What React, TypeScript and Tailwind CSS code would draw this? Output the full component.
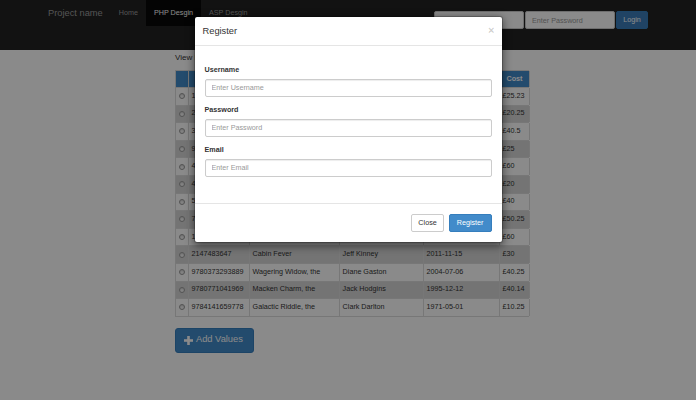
import React from "react";

const rows: string[][] = [
  ["1407109340", "Skulduggery Pleasant", "Derek Landy", "2007-04-02", "£25.23"],
  ["2070541274", "Harry Potter, the", "J. K. Rowling", "1998-10-09", "£20.25"],
  ["3442470165", "Perfume, the", "Patrick Suskind", "1985-03-12", "£40.5"],
  ["9780007117116", "Hobbit, the", "J. R. R. Tolkien", "1937-09-21", "£25"],
  ["4061859994", "Norwegian Wood", "Haruki Murakami", "1987-08-04", "£60"],
  ["4101001545", "Kokoro", "Natsume Soseki", "1914-04-20", "£20"],
  ["5170185720", "Master and Margarita", "Mikhail Bulgakov", "1967-11-01", "£40"],
  ["7020002205", "Dream of the Red", "Cao Xueqin", "1791-02-14", "£50.25"],
  ["1853260002", "Pride and Prejudice", "Jane Austen", "1813-01-28", "£60"],
  ["2147483647", "Cabin Fever", "Jeff Kinney", "2011-11-15", "£30"],
  ["9780373293889", "Wagering Widow, the", "Diane Gaston", "2004-07-06", "£40.25"],
  ["9780771041969", "Macken Charm, the", "Jack Hodgins", "1995-12-12", "£40.14"],
  ["9784141659778", "Galactic Riddle, the", "Clark Darlton", "1971-05-01", "£10.25"],
];

const headers = ["", "ISBN", "Title", "Author", "Date", "Cost"];

function Radio() {
  return (
    <div className="w-[6px] h-[6px] rounded-full border border-[#9a9a9a] bg-[#f2f2f2] shadow-[inset_0_1px_1px_rgba(0,0,0,0.15)]" />
  );
}

function PlusIcon() {
  return (
    <svg width="9" height="9" viewBox="0 0 9 9" className="shrink-0">
      <rect x="3.2" y="0" width="2.6" height="9" fill="white" />
      <rect x="0" y="3.2" width="9" height="2.6" fill="white" />
    </svg>
  );
}

export default function App() {
  return (
    <div className="relative h-[400px] w-[696px] overflow-hidden bg-white font-['Liberation_Sans',Arial,sans-serif] text-[#333]">
      {/* Navbar */}
      <nav className="h-[50px] bg-[#222] flex px-[40px]">
        <div className="px-[8px] h-[26px] leading-[26px] text-[9.3px] text-[#9d9d9d]">Project name</div>
        <ul className="flex">
          <li className="px-[8px] h-[26px] leading-[26px] text-[7.2px] text-[#9d9d9d]">Home</li>
          <li className="px-[8px] h-[26px] leading-[26px] text-[7.2px] text-white bg-[#080808]">PHP Desgin</li>
          <li className="px-[8px] h-[26px] leading-[26px] text-[7.2px] text-[#9d9d9d]">ASP Desgin</li>
        </ul>
        <div className="ml-auto mr-[8px] mt-[11px] flex gap-[1px] h-[18px]">
          <input
            placeholder="Enter Username"
            className="w-[90px] h-[18px] border border-[#ccc] rounded-[2px] bg-white pl-[6px] text-[7.2px] placeholder:text-[#999] outline-none"
          />
          <input
            placeholder="Enter Password"
            className="w-[90px] h-[18px] border border-[#ccc] rounded-[2px] bg-white pl-[6px] text-[7.2px] placeholder:text-[#999] outline-none"
          />
          <button className="w-[32px] h-[18px] bg-[#3b7dba] border border-[#357ebd] rounded-[2px] text-white text-[7.2px]">
            Login
          </button>
        </div>
      </nav>

      {/* Main content */}
      <main className="pl-[175px] pt-[3px]">
        <div className="h-[10px] leading-[10px] text-[8px] mb-[7px]">View Books</div>
        <div className="w-[354px] border-l border-t border-[#ddd]">
          <div className="grid grid-cols-[13px_61px_90px_84px_76px_30px] h-[17px] bg-[#428bca] text-white font-bold text-[7.2px] border-b border-[#ddd]">
            {headers.map((h, i) => (
              <div key={i} className="border-r border-[#ddd] flex items-center justify-center whitespace-nowrap overflow-hidden">
                {h}
              </div>
            ))}
          </div>
          {rows.map((r, i) => (
            <div
              key={i}
              className={`grid grid-cols-[13px_61px_90px_84px_76px_30px] h-[17.6px] text-[7.2px] border-b border-[#ddd] ${
                i % 2 === 0 ? "bg-white" : "bg-[#d6d6d6]"
              }`}
            >
              <div className="border-r border-[#ddd] flex items-center justify-center">
                <Radio />
              </div>
              {r.map((c, j) => (
                <div key={j} className="border-r border-[#ddd] flex items-center px-[2.6px] whitespace-nowrap overflow-hidden">
                  {c}
                </div>
              ))}
            </div>
          ))}
        </div>
        <button className="mt-[11px] h-[25px] w-[79px] flex items-center pl-[8px] gap-[3px] bg-[#428bca] border border-[#357ebd] rounded-[3px] text-white text-[9.3px]">
          <PlusIcon />
          <span>Add Values</span>
        </button>
      </main>

      {/* Backdrop */}
      <div className="absolute inset-0 bg-black/[0.46]" />

      {/* Modal */}
      <div className="absolute inset-0 flex justify-center items-start pt-[16px]">
        <div className="w-[309px] bg-white border border-black/20 rounded-[3px] shadow-[0_2.5px_8px_rgba(0,0,0,0.5)] bg-clip-padding">
          <div className="h-[29px] flex items-center justify-between pl-[8px] pr-[7px] border-b border-[#e5e5e5]">
            <div className="text-[9.3px] leading-[13px] text-[#333]">Register</div>
            <div className="text-[11px] font-bold leading-none text-black/20 -mt-[2px]">×</div>
          </div>
          <div className="pt-[19px] pb-[18px] px-[10px]">
            {[
              ["Username", "Enter Username"],
              ["Password", "Enter Password"],
              ["Email", "Enter Email"],
            ].map(([label, ph]) => (
              <div key={label} className="mb-[8.5px]">
                <div className="h-[10px] leading-[10px] text-[7.2px] font-bold text-[#333] mb-[3.5px]">{label}</div>
                <input
                  placeholder={ph}
                  className="block w-full h-[18px] border border-[#ccc] rounded-[2px] bg-white pl-[6px] text-[7.2px] placeholder:text-[#999] outline-none shadow-[inset_0_1px_1px_rgba(0,0,0,0.075)]"
                />
              </div>
            ))}
          </div>
          <div className="border-t border-[#e5e5e5] pt-[10px] pb-[10px] px-[10px] flex justify-end gap-[5px]">
            <button className="h-[18px] px-[6px] border border-[#ccc] rounded-[2px] bg-white text-[#333] text-[7.2px]">
              Close
            </button>
            <button className="h-[18px] px-[7px] border border-[#357ebd] rounded-[2px] bg-[#428bca] text-white text-[7.2px]">
              Register
            </button>
          </div>
        </div>
      </div>
    </div>
  );
}
